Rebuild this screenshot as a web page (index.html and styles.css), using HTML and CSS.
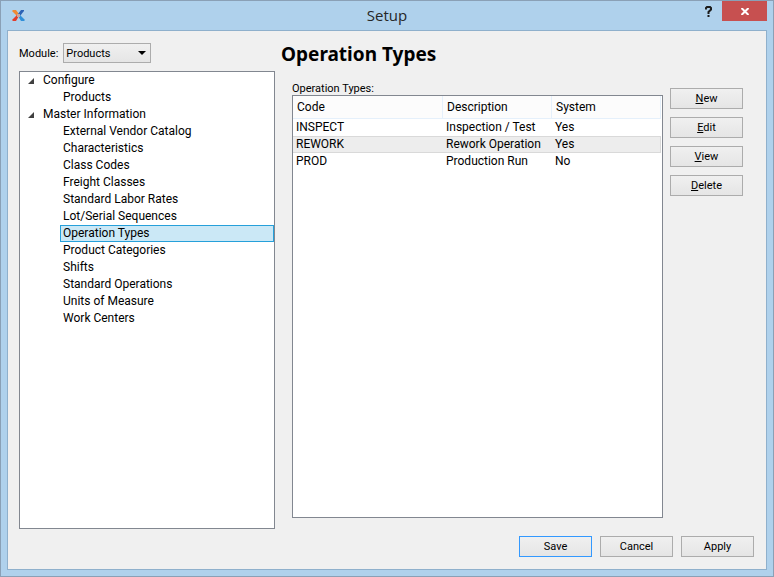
FILE: index.html
```html
<!DOCTYPE html>
<html lang="en">
<head>
<meta charset="utf-8">
<title>Setup</title>
<link rel="stylesheet" href="styles.css">
</head>
<body>
<div class="window">
  <header class="titlebar">
    <svg class="logo" viewBox="0 0 13 11" aria-hidden="true">
      <path d="M0 1l1-1h3l3 4-2 2z" fill="#f08a35"/>
      <path d="M12 0H9L6 4l2 2 4-5z" fill="#2b62b5"/>
      <path d="M0 10l1 1h3l3-5-2-1z" fill="#e23c2c"/>
      <path d="M13 10l-1 1H9L6 6l2-1z" fill="#2f8fd8"/>
      <path d="M5 4h3v3H5z" fill="#c9a5a0"/>
    </svg>
    <h1 class="caption">Setup</h1>
    <button class="help" type="button" aria-label="Help">
      <svg viewBox="0 0 8 11" aria-hidden="true"><path d="M1 3.500V2l1-1h3l1 1v1.500L3.500 6v2M3.500 9v2" fill="none" stroke="#1c1c1c" stroke-width="2"/></svg>
    </button>
    <button class="close" type="button" aria-label="Close">
      <svg viewBox="0 0 8 7" aria-hidden="true"><path d="M.5 0l7 7M7.500 0l-7 7" stroke="#fff" stroke-width="2"/></svg>
    </button>
  </header>
  <main class="client">
    <div class="body">
      <div class="side">
        <div class="module">
          <label for="module">Module:</label>
          <div class="combo">
            <select id="module"><option>Products</option></select>
            <svg viewBox="0 0 8 4" aria-hidden="true"><path d="M0 0h8L4 4z"/></svg>
          </div>
        </div>
        <nav class="tree" aria-label="Settings">
          <ul>
            <li><span class="branch"><svg viewBox="0 0 6 6" aria-hidden="true"><path d="M6 0v6H0z"/></svg>Configure</span>
              <ul class="leaves">
                <li><a href="#">Products</a></li>
              </ul>
            </li>
            <li><span class="branch"><svg viewBox="0 0 6 6" aria-hidden="true"><path d="M6 0v6H0z"/></svg>Master Information</span>
              <ul class="leaves">
                <li><a href="#">External Vendor Catalog</a></li>
                <li><a href="#">Characteristics</a></li>
                <li><a href="#">Class Codes</a></li>
                <li><a href="#">Freight Classes</a></li>
                <li><a href="#">Standard Labor Rates</a></li>
                <li><a href="#">Lot/Serial Sequences</a></li>
                <li><a href="#" class="current" aria-current="page">Operation Types</a></li>
                <li><a href="#">Product Categories</a></li>
                <li><a href="#">Shifts</a></li>
                <li><a href="#">Standard Operations</a></li>
                <li><a href="#">Units of Measure</a></li>
                <li><a href="#">Work Centers</a></li>
              </ul>
            </li>
          </ul>
        </nav>
      </div>
      <section class="panel">
        <h2>Operation Types</h2>
        <div class="content">
          <div class="list">
            <span class="list-label" id="list-label">Operation Types:</span>
            <div class="frame">
              <table aria-labelledby="list-label">
                <thead>
                  <tr><th class="code">Code</th><th class="description">Description</th><th>System</th></tr>
                </thead>
                <tbody>
                  <tr><td>INSPECT</td><td>Inspection / Test</td><td>Yes</td></tr>
                  <tr class="alternate"><td>REWORK</td><td>Rework Operation</td><td>Yes</td></tr>
                  <tr><td>PROD</td><td>Production Run</td><td>No</td></tr>
                </tbody>
              </table>
            </div>
          </div>
          <div class="actions">
            <button class="push" type="button"><u>N</u>ew</button>
            <button class="push" type="button"><u>E</u>dit</button>
            <button class="push" type="button"><u>V</u>iew</button>
            <button class="push" type="button"><u>D</u>elete</button>
          </div>
        </div>
      </section>
    </div>
    <footer class="footer">
      <button class="push default" type="button">Save</button>
      <button class="push" type="button">Cancel</button>
      <button class="push" type="button">Apply</button>
    </footer>
  </main>
</div>
</body>
</html>
```
FILE: styles.css
```css
* {
  box-sizing: border-box;
}

body {
  margin: 0;
  font: 12px/15px Roboto, "Noto Sans", sans-serif;
  color: #000;
}

ul {
  margin: 0;
  padding: 0;
  list-style: none;
}

button,
select {
  margin: 0;
  color: inherit;
  font: inherit;
}

svg {
  display: block;
}

.window {
  display: flex;
  flex-direction: column;
  min-height: 100vh;
  padding: 0 6px 6px;
  border: 1px solid #8aa0b6;
  background: #afd1ec;
}

.titlebar {
  display: grid;
  grid-template-columns: 67px 1fr 22px 45px;
  align-items: start;
  height: 29px;
}

.logo {
  width: 13px;
  height: 11px;
  margin: 9px 0 0 5px;
}

.caption {
  margin: 0;
  color: #262626;
  font: 15px/29px "Open Sans", sans-serif;
  text-align: center;
}

.help,
.close {
  display: grid;
  place-items: center;
  height: 20px;
  padding: 0;
  border: 0;
  background: none;
}

.help {
  padding-right: 4px;
}

.help svg {
  width: 8px;
  height: 11px;
}

.close {
  background: #c75050;
}

.close svg {
  width: 8px;
  height: 7px;
}

.client {
  display: flex;
  flex: 1;
  flex-direction: column;
  padding: 12px 12px 12px 11px;
  border: 1px solid #8fb0cc;
  background: #f0f0f0;
}

.body {
  display: grid;
  flex: 1;
  grid-template-columns: 256px 1fr;
  gap: 6px;
}

.side {
  display: flex;
  flex-direction: column;
  gap: 8px;
}

.module {
  display: flex;
  align-items: center;
  gap: 5px;
  font-size: 11px;
}

.combo {
  display: grid;
  align-items: center;
  width: 88px;
}

.combo select,
.combo svg {
  grid-area: 1 / 1;
}

.combo select {
  height: 20px;
  padding: 0 2px;
  border: 1px solid #acacac;
  border-radius: 0;
  appearance: none;
  background: linear-gradient(#f0f0f0, #e5e5e5);
}

.combo svg {
  justify-self: end;
  width: 8px;
  height: 4px;
  margin-right: 5px;
  pointer-events: none;
}

.tree {
  flex: 1;
  border: 1px solid #828790;
  background: #fff;
}

.branch {
  display: flex;
  align-items: center;
  gap: 9px;
  height: 17px;
  padding-left: 8px;
}

.branch svg {
  width: 6px;
  height: 6px;
  fill: #404040;
}

.leaves {
  padding-left: 40px;
}

.leaves a {
  display: block;
  height: 17px;
  padding: 0 2px;
  border: 1px solid transparent;
  color: inherit;
  text-decoration: none;
}

.leaves .current {
  border-color: #26a0da;
  background: #cbe8f6;
}

.panel {
  display: flex;
  flex-direction: column;
}

.panel h2 {
  margin: 0;
  font: bold 19px/22px "Noto Sans", sans-serif;
}

.content {
  display: grid;
  flex: 1;
  grid-template-columns: 1fr 73px;
  gap: 7px;
  padding: 18px 11px 11px;
}

.list {
  display: flex;
  flex-direction: column;
}

.list-label {
  font-size: 11px;
  line-height: 12px;
}

.frame {
  flex: 1;
  padding-right: 1px;
  border: 1px solid #828790;
  background: #fff;
}

table {
  width: 100%;
  border-collapse: separate;
  border-spacing: 0;
  table-layout: fixed;
}

th,
td {
  padding: 0 3px;
  text-align: left;
}

th {
  height: 23px;
  padding: 0 4px;
  border-right: 1px solid #e5f0fb;
  border-bottom: 1px solid #e5f0fb;
  background: #fcfcfc;
  font-weight: 400;
}

.code {
  width: 150px;
}

.description {
  width: 109px;
}

td {
  height: 17px;
}

.alternate td {
  border: solid #d9d9d9;
  border-width: 1px 0;
  background: #ededed;
}

.alternate td:last-child {
  border-right-width: 1px;
}

.actions {
  display: flex;
  flex-direction: column;
  gap: 8px;
  padding-top: 5px;
}

.push {
  width: 73px;
  height: 21px;
  padding: 0;
  border: 1px solid #acacac;
  background: linear-gradient(#f0f0f0, #e5e5e5);
  font-size: 11px;
  line-height: 19px;
}

.push.default {
  border-color: #3399ff;
}

.push u {
  text-underline-offset: 1px;
}

.footer {
  display: flex;
  justify-content: flex-end;
  gap: 8px;
  padding-top: 7px;
}
```
